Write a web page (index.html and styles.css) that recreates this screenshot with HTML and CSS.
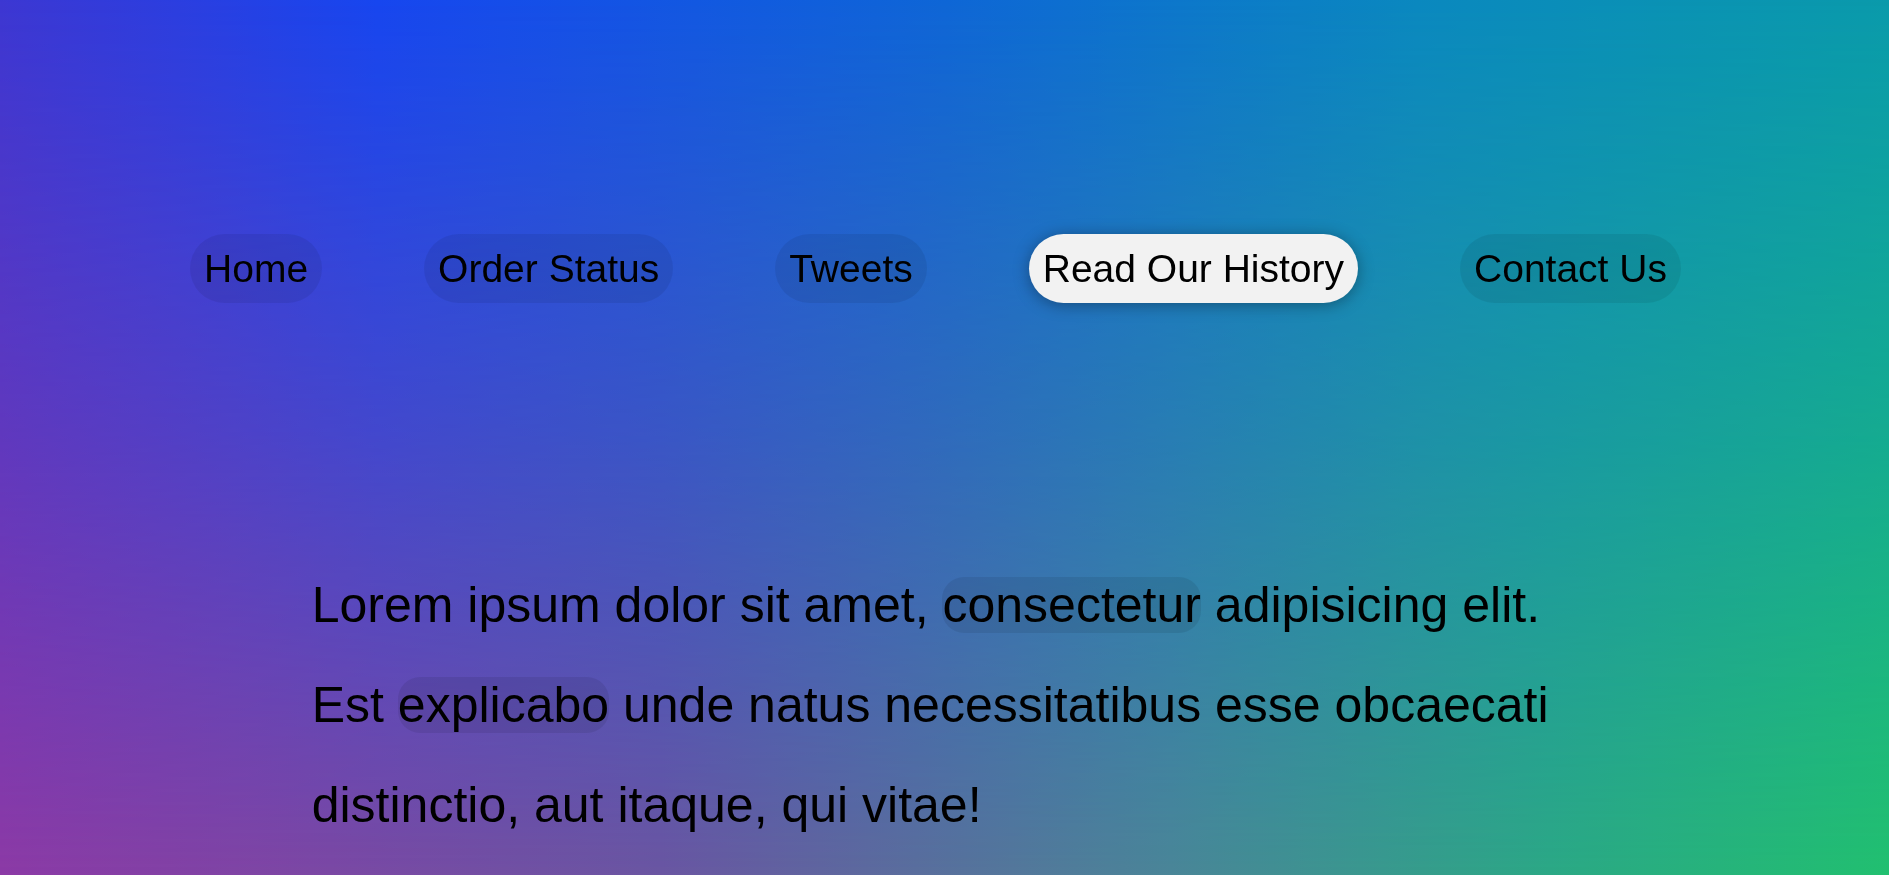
FILE: index.html
```html
<!DOCTYPE html>
<html lang="en">
<head>
<meta charset="utf-8">
<title>Gradient Nav</title>
<link rel="stylesheet" href="styles.css">
</head>
<body>
<div class="page">
  <nav class="nav">
    <ul class="nav-list">
      <li><a class="nav-link" href="#">Home</a></li>
      <li><a class="nav-link" href="#">Order Status</a></li>
      <li><a class="nav-link" href="#">Tweets</a></li>
      <li><a class="nav-link active" href="#">Read Our History</a></li>
      <li><a class="nav-link" href="#">Contact Us</a></li>
    </ul>
  </nav>
  <main class="content">
    <p class="text">Lorem ipsum dolor sit amet, <span class="mark">consectetur</span> adipisicing elit. Est <span class="mark">explicabo</span> unde natus necessitatibus esse obcaecati distinctio, aut itaque, qui vitae!</p>
  </main>
</div>
</body>
</html>
```

FILE: styles.css
```css
html, body {
  margin: 0;
  padding: 0;
  height: 100%;
}

body {
  font-family: "Liberation Sans", Arial, sans-serif;
  color: #000;
  background: linear-gradient(to right, #8c3aa6 0%, #6a56a2 35%, #4a8698 62%, #2ca886 82%, #22c070 100%);
  overflow: hidden;
}

body::before {
  content: "";
  position: fixed;
  inset: 0;
  z-index: -1;
  background: linear-gradient(to right, #3c37d2 0%, #1746ef 20%, #0e66d6 50%, #0a88bf 75%, #0a9aab 100%);
  -webkit-mask-image: linear-gradient(to bottom, #000 0%, rgba(0,0,0,0.55) 50%, rgba(0,0,0,0) 100%);
  mask-image: linear-gradient(to bottom, #000 0%, rgba(0,0,0,0.55) 50%, rgba(0,0,0,0) 100%);
}

.page {
  position: relative;
  z-index: 0;
  min-height: 100%;
}

.nav {
  padding-top: 234px;
}

.nav-list {
  list-style: none;
  margin: 0;
  padding: 0 18px 0 0;
  display: flex;
  justify-content: center;
  gap: 102px;
}

.nav-link {
  display: block;
  font-size: 39px;
  line-height: 45px;
  padding: 12px 14px;
  border-radius: 40px;
  color: #000;
  text-decoration: none;
  background: rgba(0, 0, 0, 0.07);
}

.nav-link.active {
  background: #f2f2f2;
  box-shadow: 0 2px 16px rgba(0, 0, 0, 0.35);
}

.content {
  width: 67%;
  margin: 252px auto 0;
}

.text {
  margin: 0;
  font-size: 50px;
  line-height: 100px;
}

.mark {
  background: rgba(0, 0, 0, 0.08);
  border-radius: 22px;
}
```
